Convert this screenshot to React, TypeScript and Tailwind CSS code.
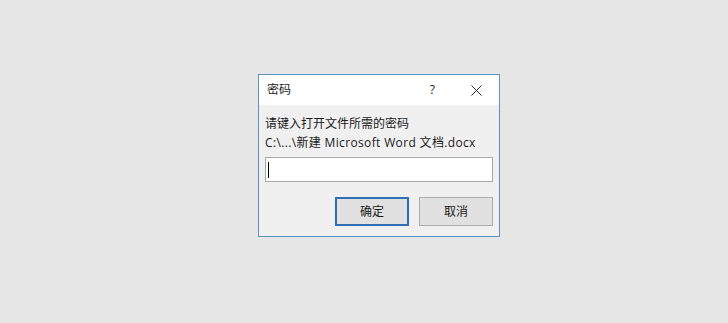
export default function App() {
  return (
    <div
      className="h-[323px] w-full bg-[#e6e6e6] pl-[258px] pt-[74px]"
      style={{ fontFamily: '"Open Sans", "Noto Sans CJK SC", sans-serif' }}
    >
      {/* 對話框 */}
      <div className="flex h-[163px] w-[242px] flex-col border border-[#5a93c6] bg-[#f0f0f0] text-[12px] text-[#1a1a1a]">
        <div className="flex h-[30px] items-center bg-white pl-[8px]">
          <span className="leading-none">密码</span>
          <span className="ml-auto mr-[36px] leading-none">?</span>
          <svg width="11" height="11" viewBox="0 0 11 11" className="mr-[17px]">
            <path d="M0.5 0.5 L10.5 10.5 M10.5 0.5 L0.5 10.5" stroke="#222" strokeWidth="1" />
          </svg>
        </div>

        <div className="flex flex-1 flex-col px-[6px]">
          <p className="mt-[11px] leading-[16px]">请键入打开文件所需的密码</p>
          <p className="mt-[3px] whitespace-nowrap leading-[16px] tracking-[0.35px]">
            C:\...\新建 Microsoft Word 文档.docx
          </p>

          <div className="mt-[6px] flex h-[25px] items-center border border-[#a9a9a9] bg-white pl-[2px]">
            <div className="h-[16px] w-[1px] bg-black" />
          </div>

          <div className="mt-[15px] flex justify-end gap-[10px]">
            <button className="h-[29px] w-[74px] border-2 border-[#2f6fb3] bg-[#e1e1e1] text-[12px]">
              确定
            </button>
            <button className="h-[29px] w-[74px] border border-[#adadad] bg-[#e1e1e1] text-[12px]">
              取消
            </button>
          </div>
        </div>
      </div>
    </div>
  );
}
